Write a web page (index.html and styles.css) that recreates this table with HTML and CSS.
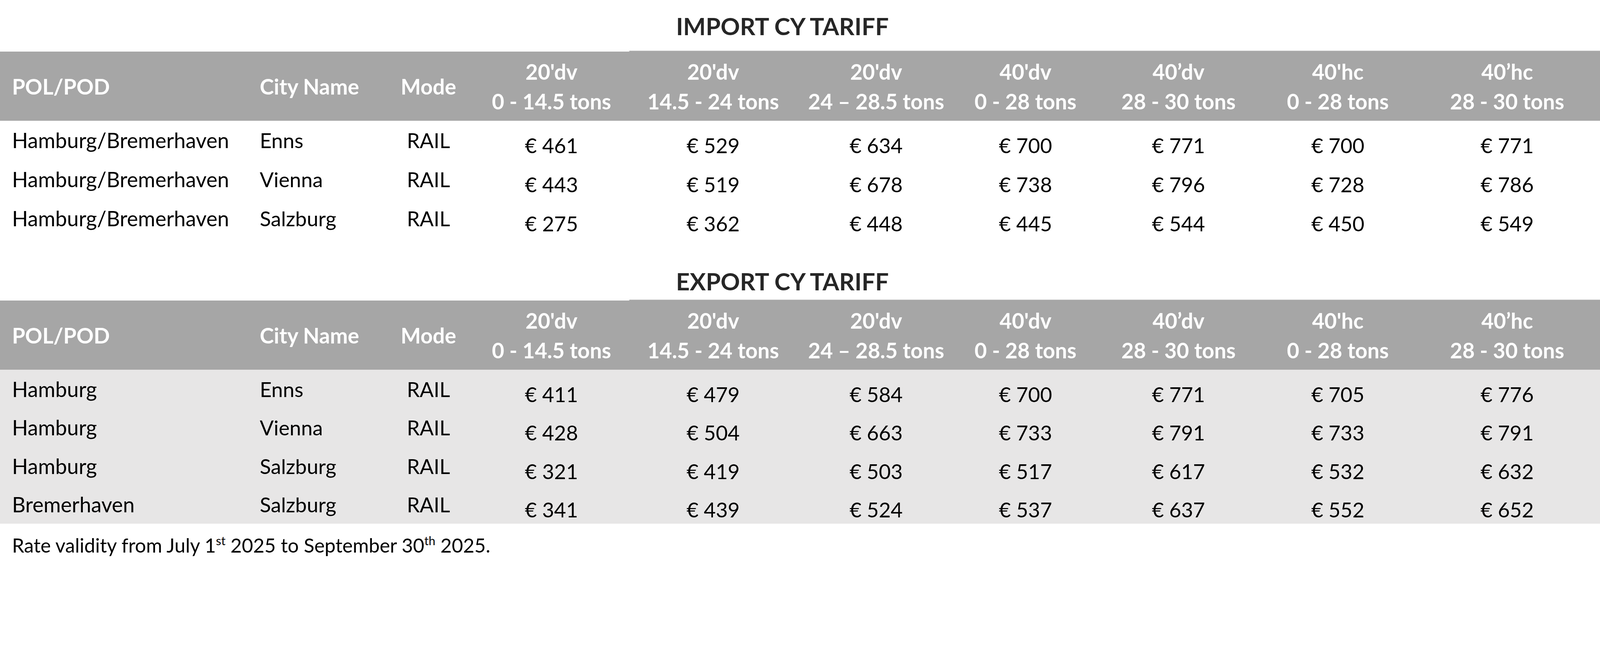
FILE: index.html
```html
<!DOCTYPE html>
<html lang="en">
<head>
<meta charset="utf-8">
<title>CY Tariff</title>
<link rel="stylesheet" href="styles.css">
</head>
<body>
<main class="page">
  <section class="tariff tariff-import">
    <h2 class="title">IMPORT CY TARIFF</h2>
    <div class="row head">
      <div class="th left first">POL/POD</div>
      <div class="th left">City Name</div>
      <div class="th">Mode</div>
      <div class="th"><span>20'dv</span><span>0 - 14.5 tons</span></div>
      <div class="th step"><span>20'dv</span><span>14.5 - 24 tons</span></div>
      <div class="th step"><span>20'dv</span><span>24 – 28.5 tons</span></div>
      <div class="th step"><span>40'dv</span><span>0 - 28 tons</span></div>
      <div class="th step"><span>40’dv</span><span>28 - 30 tons</span></div>
      <div class="th step"><span>40'hc</span><span>0 - 28 tons</span></div>
      <div class="th step"><span>40’hc</span><span>28 - 30 tons</span></div>
    </div>
    <div class="row body">
      <div class="td first">Hamburg/Bremerhaven</div><div class="td">Enns</div><div class="td mode">RAIL</div>
      <div class="td num">€ 461</div><div class="td num">€ 529</div><div class="td num">€ 634</div><div class="td num">€ 700</div><div class="td num">€ 771</div><div class="td num">€ 700</div><div class="td num">€ 771</div>
    </div>
    <div class="row body">
      <div class="td first">Hamburg/Bremerhaven</div><div class="td">Vienna</div><div class="td mode">RAIL</div>
      <div class="td num">€ 443</div><div class="td num">€ 519</div><div class="td num">€ 678</div><div class="td num">€ 738</div><div class="td num">€ 796</div><div class="td num">€ 728</div><div class="td num">€ 786</div>
    </div>
    <div class="row body">
      <div class="td first">Hamburg/Bremerhaven</div><div class="td">Salzburg</div><div class="td mode">RAIL</div>
      <div class="td num">€ 275</div><div class="td num">€ 362</div><div class="td num">€ 448</div><div class="td num">€ 445</div><div class="td num">€ 544</div><div class="td num">€ 450</div><div class="td num">€ 549</div>
    </div>
  </section>

  <section class="tariff tariff-export">
    <h2 class="title">EXPORT CY TARIFF</h2>
    <div class="row head">
      <div class="th left first">POL/POD</div>
      <div class="th left">City Name</div>
      <div class="th">Mode</div>
      <div class="th"><span>20'dv</span><span>0 - 14.5 tons</span></div>
      <div class="th step"><span>20'dv</span><span>14.5 - 24 tons</span></div>
      <div class="th step"><span>20'dv</span><span>24 – 28.5 tons</span></div>
      <div class="th step"><span>40'dv</span><span>0 - 28 tons</span></div>
      <div class="th step"><span>40’dv</span><span>28 - 30 tons</span></div>
      <div class="th step"><span>40'hc</span><span>0 - 28 tons</span></div>
      <div class="th step"><span>40’hc</span><span>28 - 30 tons</span></div>
    </div>
    <div class="shaded">
      <div class="row body">
        <div class="td first">Hamburg</div><div class="td">Enns</div><div class="td mode">RAIL</div>
        <div class="td num">€ 411</div><div class="td num">€ 479</div><div class="td num">€ 584</div><div class="td num">€ 700</div><div class="td num">€ 771</div><div class="td num">€ 705</div><div class="td num">€ 776</div>
      </div>
      <div class="row body">
        <div class="td first">Hamburg</div><div class="td">Vienna</div><div class="td mode">RAIL</div>
        <div class="td num">€ 428</div><div class="td num">€ 504</div><div class="td num">€ 663</div><div class="td num">€ 733</div><div class="td num">€ 791</div><div class="td num">€ 733</div><div class="td num">€ 791</div>
      </div>
      <div class="row body">
        <div class="td first">Hamburg</div><div class="td">Salzburg</div><div class="td mode">RAIL</div>
        <div class="td num">€ 321</div><div class="td num">€ 419</div><div class="td num">€ 503</div><div class="td num">€ 517</div><div class="td num">€ 617</div><div class="td num">€ 532</div><div class="td num">€ 632</div>
      </div>
      <div class="row body">
        <div class="td first">Bremerhaven</div><div class="td">Salzburg</div><div class="td mode">RAIL</div>
        <div class="td num">€ 341</div><div class="td num">€ 439</div><div class="td num">€ 524</div><div class="td num">€ 537</div><div class="td num">€ 637</div><div class="td num">€ 552</div><div class="td num">€ 652</div>
      </div>
    </div>
  </section>

  <p class="note">Rate validity from July 1<sup>st</sup> 2025 to September 30<sup>th</sup> 2025.</p>
</main>
</body>
</html>
```

FILE: styles.css
```css
/* one unit = one pixel of the 4810px-wide design, whatever the device pixel ratio */
:root {
  --u: calc(100vw / 4810);
}

html, body {
  margin: 0;
  padding: 0;
  background: #ffffff;
}

body {
  font-family: "Lato", "Liberation Sans", sans-serif;
  color: #000000;
}

.page {
  width: 100%;
}

.title {
  margin: 0;
  padding-right: calc(106 * var(--u));
  text-align: center;
  font-size: calc(72 * var(--u));
  font-weight: 700;
  line-height: calc(86 * var(--u));
  color: #262626;
}

.tariff-import .title {
  padding-top: calc(35 * var(--u));
  margin-bottom: calc(34 * var(--u));
}

.tariff-export .title {
  margin-top: calc(87 * var(--u));
  margin-bottom: calc(14.5 * var(--u));
}

.row {
  display: grid;
  grid-template-columns:
    calc(747 * var(--u)) calc(405 * var(--u)) calc(272 * var(--u))
    calc(468 * var(--u)) calc(504 * var(--u)) calc(476 * var(--u))
    calc(422 * var(--u)) calc(498 * var(--u)) calc(460 * var(--u))
    calc(558 * var(--u));
}

.head {
  height: calc(208 * var(--u));
  background: #a6a6a6;
  color: #ffffff;
  font-weight: 700;
  font-size: calc(64 * var(--u));
}

.th {
  display: flex;
  flex-direction: column;
  justify-content: center;
  align-items: center;
  padding-top: calc(4 * var(--u));
  line-height: calc(89 * var(--u));
  white-space: nowrap;
}

.th.left {
  align-items: flex-start;
  padding-left: calc(34 * var(--u));
}

.th.first {
  padding-left: calc(36 * var(--u));
}

.th.step {
  background: #a6a6a6;
  box-shadow: 0 calc(-2 * var(--u)) 0 #a6a6a6, 0 calc(-3 * var(--u)) 0 #d9d9d9;
}

.body {
  height: calc(117.5 * var(--u));
  font-size: calc(62 * var(--u));
  line-height: calc(74 * var(--u));
}

.shaded {
  background: #e7e6e6;
}

.shaded .body {
  height: calc(115.6 * var(--u));
}

.td {
  padding-top: calc(21 * var(--u));
  padding-left: calc(34 * var(--u));
  white-space: nowrap;
}

.td.first {
  padding-left: calc(36 * var(--u));
  font-size: calc(63 * var(--u));
}

.td.mode {
  padding-left: 0;
  text-align: center;
}

.td.num {
  padding-left: 0;
  padding-top: calc(36 * var(--u));
  text-align: center;
}

.note {
  margin: calc(29 * var(--u)) 0 0 0;
  padding-left: calc(36 * var(--u));
  font-size: calc(58.7 * var(--u));
  line-height: calc(74 * var(--u));
}

.note sup {
  font-size: 0.62em;
  line-height: 0;
  vertical-align: 0.62em;
}
```
